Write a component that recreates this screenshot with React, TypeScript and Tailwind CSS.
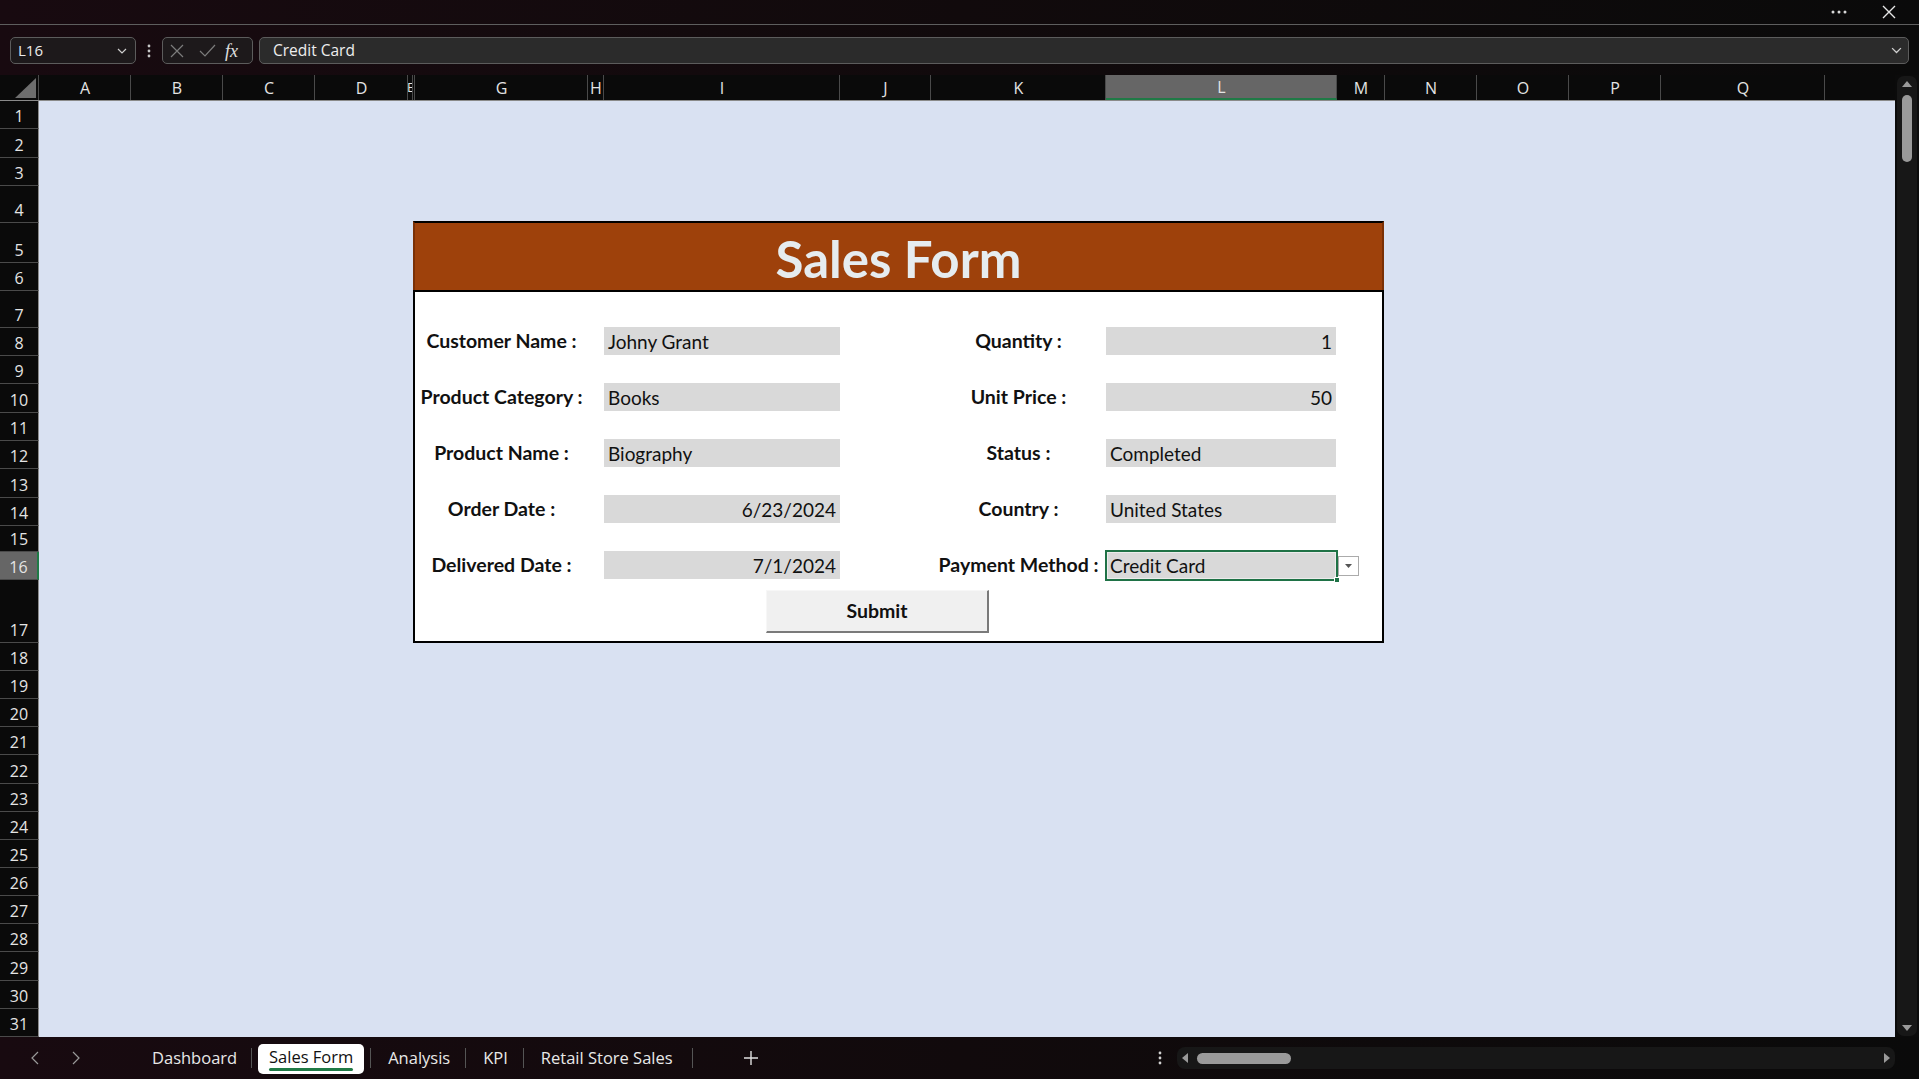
import React from "react";

type Col = { label: string; w: string; selected?: boolean };

const columns: Col[] = [
  { label: "A", w: "w-[92px]" },
  { label: "B", w: "w-[92px]" },
  { label: "C", w: "w-[92px]" },
  { label: "D", w: "w-[93px]" },
  { label: "E", w: "w-[5px]" },
  { label: "", w: "w-[2px]" },
  { label: "G", w: "w-[173px]" },
  { label: "H", w: "w-[16px]" },
  { label: "I", w: "w-[236px]" },
  { label: "J", w: "w-[91px]" },
  { label: "K", w: "w-[175px]" },
  { label: "L", w: "w-[231px]", selected: true },
  { label: "M", w: "w-[48px]" },
  { label: "N", w: "w-[92px]" },
  { label: "O", w: "w-[92px]" },
  { label: "P", w: "w-[92px]" },
  { label: "Q", w: "w-[164px]" },
];

const rowHeights = [
  "h-[28px]", "h-[29px]", "h-[28px]", "h-[37px]", "h-[40px]", "h-[28px]", "h-[37px]", "h-[28px]",
  "h-[28px]", "h-[29px]", "h-[28px]", "h-[28px]", "h-[29px]", "h-[28px]", "h-[26px]", "h-[28px]",
  "h-[63px]", "h-[28px]", "h-[28px]", "h-[28px]", "h-[28px]", "h-[29px]", "h-[28px]", "h-[28px]",
  "h-[28px]", "h-[28px]", "h-[28px]", "h-[28px]", "h-[29px]", "h-[28px]", "h-[28px]",
];

const formRows = [
  { l: "Customer Name :", v: "Johny Grant", r: "Quantity :", rv: "1", vRight: false, rvRight: true },
  { l: "Product Category :", v: "Books", r: "Unit Price :", rv: "50", vRight: false, rvRight: true },
  { l: "Product Name :", v: "Biography", r: "Status :", rv: "Completed", vRight: false, rvRight: false },
  { l: "Order Date :", v: "6/23/2024", r: "Country :", rv: "United States", vRight: true, rvRight: false },
  { l: "Delivered Date :", v: "7/1/2024", r: "Payment Method :", rv: "Credit Card", vRight: true, rvRight: false, sel: true },
];

const Dot3 = ({ vertical = false, color = "#d8d8d8" }: { vertical?: boolean; color?: string }) =>
  vertical ? (
    <svg width="4" height="14" viewBox="0 0 4 14">
      <circle cx="2" cy="2" r="1.4" fill={color} />
      <circle cx="2" cy="7" r="1.4" fill={color} />
      <circle cx="2" cy="12" r="1.4" fill={color} />
    </svg>
  ) : (
    <svg width="16" height="4" viewBox="0 0 16 4">
      <circle cx="2" cy="2" r="1.5" fill={color} />
      <circle cx="8" cy="2" r="1.5" fill={color} />
      <circle cx="14" cy="2" r="1.5" fill={color} />
    </svg>
  );

const Chevron = ({ size = 10, color = "#cfcfcf" }: { size?: number; color?: string }) => (
  <svg width={size} height={size * 0.6} viewBox="0 0 10 6">
    <polyline points="1,1 5,5 9,1" fill="none" stroke={color} strokeWidth="1.2" />
  </svg>
);

function TopBars() {
  return (
    <div className="bg-linear-to-r from-[#180a10] via-[#110a0c] to-[#0a0a0a]">
      <div className="h-[25px] border-b border-[#5e5e5e] flex items-center justify-end pr-[23px]">
        <Dot3 />
        <svg className="ml-[35px]" width="14" height="14" viewBox="0 0 14 14">
          <path d="M1 1 L13 13 M13 1 L1 13" stroke="#e6e6e6" strokeWidth="1.4" />
        </svg>
      </div>
      <div className="h-[50px] flex items-start pt-[12px] pl-[10px] pr-[10px] font-['Open_Sans','Noto_Sans',sans-serif]">
        <div className="w-[126px] h-[27px] rounded-[5px] border border-[#5c5c5c] bg-[#1d191b] flex items-center pl-[7px] pr-[8px] justify-between">
          <span className="text-[15px] text-[#ececec]">L16</span>
          <Chevron />
        </div>
        <div className="w-[26px] h-[27px] flex items-center justify-center">
          <Dot3 vertical color="#c8c8c8" />
        </div>
        <div className="w-[91px] h-[27px] rounded-[5px] border border-[#5c5c5c] bg-[#1d191b] flex items-center pl-[7px]">
          <svg width="14" height="14" viewBox="0 0 14 14">
            <path d="M1 1 L13 13 M13 1 L1 13" stroke="#7c7c7c" strokeWidth="1.2" />
          </svg>
          <svg className="ml-[15px]" width="17" height="14" viewBox="0 0 17 14">
            <polyline points="1,7 6,12 16,1" fill="none" stroke="#7c7c7c" strokeWidth="1.2" />
          </svg>
          <span className="ml-[9px] text-[18px] italic text-[#e0e0e0] font-['Liberation_Serif',serif] leading-none">fx</span>
        </div>
        <div className="ml-[6px] flex-1 h-[27px] rounded-[5px] border border-[#5c5c5c] bg-[#2b2b2b] flex items-center justify-between pl-[13px] pr-[6px]">
          <span className="text-[15.5px] text-[#eeeeee]">Credit Card</span>
          <Chevron size={11} />
        </div>
      </div>
    </div>
  );
}

function ColumnHeaders() {
  return (
    <div className="h-[26px] flex bg-[#0a0a0a] border-b border-[#8a8a8a] font-['Open_Sans','Noto_Sans',sans-serif] text-[16px] text-[#e4e4e4]">
      <div className="w-[39px] shrink-0 h-full border-r border-[#4a4a4a] flex items-end justify-end pr-[2px] pb-[2px]">
        <svg width="21" height="20" viewBox="0 0 21 20">
          <polygon points="21,0 21,20 0,20" fill="#6e6e6e" />
        </svg>
      </div>
      {columns.map((c, i) => (
        <div
          key={i}
          className={`${c.w} shrink-0 h-full border-r border-[#4a4a4a] flex items-center justify-center overflow-hidden pl-[1px] ${
            c.selected ? "bg-[#666666] border-b-2 border-b-[#1f7a46]" : ""
          } ${c.label === "E" ? "text-[13px]" : ""}`}
        >
          {c.label}
        </div>
      ))}
      <div className="flex-1" />
    </div>
  );
}

function Field({ value, right, w, selected }: { value: string; right: boolean; w: string; selected?: boolean }) {
  return (
    <div className={`${w} h-[28px] relative bg-[#d9d9d9] flex items-center px-[4px] ${right ? "justify-end" : "justify-start"}`}>
      <span className="text-[19px] text-[#111] leading-none">{value}</span>
      {selected && (
        <>
          <div className="absolute -left-[1px] -top-[1px] -right-[2px] -bottom-[2px] border-2 border-[#1f7246] shadow-[inset_0_0_0_1px_#ececec]" />
          <div className="absolute -right-[4px] -bottom-[4px] w-[6px] h-[6px] bg-[#1f7246] border border-white" />
          <div className="absolute left-[calc(100%+2px)] top-[5px] w-[21px] h-[20px] bg-white border border-[#ababab] flex items-center justify-center">
            <svg width="7" height="4" viewBox="0 0 7 4">
              <polygon points="0,0 7,0 3.5,4" fill="#555" />
            </svg>
          </div>
        </>
      )}
    </div>
  );
}

function SalesForm() {
  return (
    <div className="ml-[374px] mt-[120px] w-[971px] font-['Lato',sans-serif]">
      <div className="h-[69px] border-t-2 border-x-2 border-t-black border-x-[#7a3006] bg-[#9e410b] flex items-center justify-center">
        <span className="text-[51px] font-bold text-[#e6ecef] leading-none mt-[4px]">Sales Form</span>
      </div>
      <div className="border-2 border-black bg-white pt-[35px] pb-[8px]">
        <div className="flex flex-col gap-[28px]">
          {formRows.map((r, i) => (
            <div key={i} className="flex h-[28px] items-center">
              <div className="w-[173px] text-center font-bold text-[19.5px] text-[#111] whitespace-nowrap">{r.l}</div>
              <div className="w-[16px]" />
              <Field value={r.v} right={r.vRight} w="w-[236px]" />
              <div className="w-[91px]" />
              <div className="w-[175px] text-center font-bold text-[19.5px] text-[#111] whitespace-nowrap">{r.r}</div>
              <Field value={r.rv} right={r.rvRight} w="w-[230px]" selected={r.sel} />
            </div>
          ))}
        </div>
        <div className="mt-[11px] h-[43px] flex">
          <div className="ml-[351px] w-[223px] h-full bg-[#f0f0f0] border-t border-l border-[#f7f7f7] border-r-2 border-b-2 border-r-[#7a7a7a] border-b-[#7a7a7a] flex items-center justify-center">
            <span className="text-[19.5px] font-bold text-[#111]">Submit</span>
          </div>
        </div>
      </div>
    </div>
  );
}

function SheetBody() {
  return (
    <div className="flex flex-1 overflow-hidden">
      <div className="w-[39px] shrink-0 flex flex-col bg-[#0a0a0a] font-['Open_Sans','Noto_Sans',sans-serif] text-[16px] text-[#e4e4e4]">
        {rowHeights.map((h, i) => (
          <div
            key={i}
            className={`${h} shrink-0 border-b border-[#4a4a4a] flex items-end justify-center pb-[1px] leading-[22px] ${
              i === 15 ? "bg-[#666666] border-r-2 border-r-[#1f7a46]" : "border-r border-r-[#8c8c8c]"
            }`}
          >
            {i + 1}
          </div>
        ))}
        <div className="flex-1 border-r border-r-[#8c8c8c]" />
      </div>
      <div className="flex-1 bg-[#d9e1f2] overflow-hidden">
        <SalesForm />
      </div>
    </div>
  );
}

function VScroll() {
  return (
    <div className="w-[24px] h-full bg-[#0b0b0b] pt-[1px] pb-[1px] px-[2px] flex flex-col">
      <div className="flex-1 rounded-[7px] bg-[#171717] flex flex-col items-center pt-[5px] pb-[5px]">
        <svg width="10" height="6" viewBox="0 0 10 6">
          <polygon points="5,0 10,6 0,6" fill="#9a9a9a" />
        </svg>
        <div className="mt-[8px] w-[10px] h-[67px] rounded-full bg-[#9a9a9a]" />
        <div className="flex-1" />
        <svg width="10" height="6" viewBox="0 0 10 6">
          <polygon points="0,0 10,0 5,6" fill="#9a9a9a" />
        </svg>
      </div>
    </div>
  );
}

function Sep() {
  return <div className="w-px h-[20px] bg-[#555555] shrink-0" />;
}

function TabBar() {
  return (
    <div className="h-[42px] flex items-center bg-linear-to-r from-[#180a10] via-[#110a0c] to-[#0a0a0a] font-['Open_Sans','Noto_Sans',sans-serif] text-[16.5px] text-[#e8e8e8]">
      <div className="ml-[26px] w-[18px] flex justify-center">
        <svg width="8" height="14" viewBox="0 0 8 14">
          <polyline points="7,1 1,7 7,13" fill="none" stroke="#9a9a9a" strokeWidth="1.2" />
        </svg>
      </div>
      <div className="ml-[23px] w-[18px] flex justify-center">
        <svg width="8" height="14" viewBox="0 0 8 14">
          <polyline points="1,1 7,7 1,13" fill="none" stroke="#9a9a9a" strokeWidth="1.2" />
        </svg>
      </div>
      <span className="ml-[67px]">Dashboard</span>
      <div className="ml-[14px]"><Sep /></div>
      <div className="ml-[6px] w-[106px] h-[30px] rounded-[5px] bg-white relative flex items-center justify-center text-[#111] mt-[2px]">
        <span className="-mt-[3px]">Sales Form</span>
        <div className="absolute left-[11px] right-[11px] bottom-[3px] h-[3px] rounded-full bg-[#1f7a46]" />
      </div>
      <div className="ml-[6px]"><Sep /></div>
      <span className="ml-[17px]">Analysis</span>
      <div className="ml-[15px]"><Sep /></div>
      <span className="ml-[17px]">KPI</span>
      <div className="ml-[15px]"><Sep /></div>
      <span className="ml-[17px]">Retail Store Sales</span>
      <div className="ml-[19px]"><Sep /></div>
      <svg className="ml-[51px]" width="14" height="14" viewBox="0 0 14 14">
        <path d="M7 0 V14 M0 7 H14" stroke="#e0e0e0" strokeWidth="1.4" />
      </svg>
      <div className="flex-1" />
      <Dot3 vertical color="#d0d0d0" />
      <div className="ml-[15px] w-[718px] h-[22px] rounded-[8px] bg-[#171717] flex items-center px-[5px]">
        <svg width="6" height="10" viewBox="0 0 6 10">
          <polygon points="0,5 6,0 6,10" fill="#9a9a9a" />
        </svg>
        <div className="ml-[9px] w-[94px] h-[11px] rounded-full bg-[#9a9a9a]" />
        <div className="flex-1" />
        <svg width="6" height="10" viewBox="0 0 6 10">
          <polygon points="6,5 0,0 0,10" fill="#9a9a9a" />
        </svg>
      </div>
      <div className="w-[24px]" />
    </div>
  );
}

export default function App() {
  return (
    <div className="w-[1919px] h-[1079px] overflow-hidden flex flex-col bg-[#0b0b0b]">
      <TopBars />
      <div className="flex h-[962px]">
        <div className="w-[1895px] flex flex-col">
          <ColumnHeaders />
          <SheetBody />
        </div>
        <VScroll />
      </div>
      <TabBar />
    </div>
  );
}
